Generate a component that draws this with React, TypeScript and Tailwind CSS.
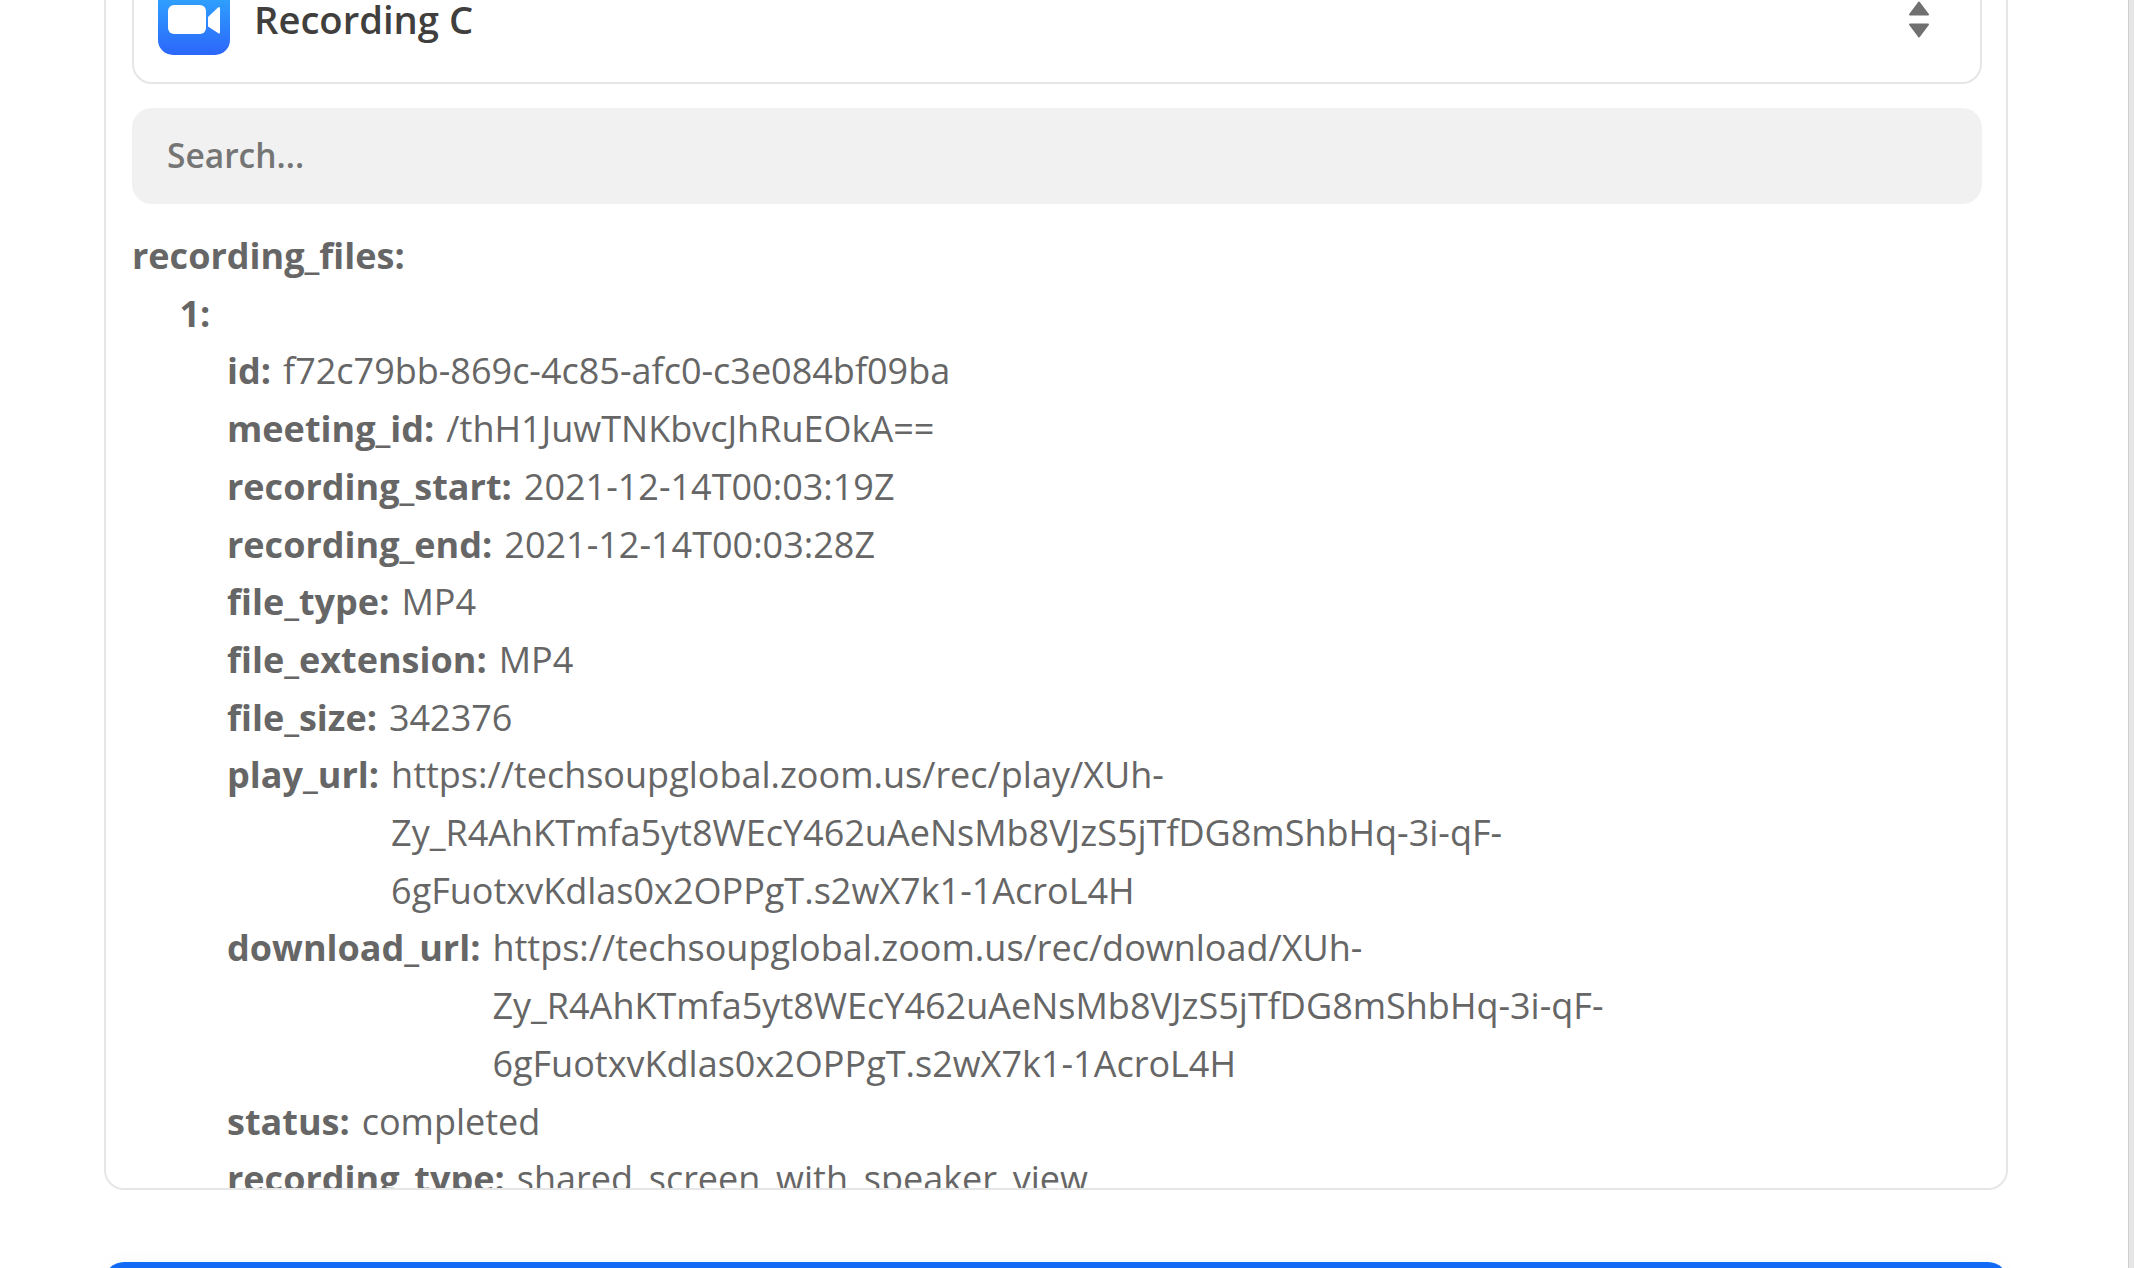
import type { ReactNode } from "react";

const fields: [string, ReactNode][] = [
  ["id", "f72c79bb-869c-4c85-afc0-c3e084bf09ba"],
  ["meeting_id", "/thH1JuwTNKbvcJhRuEOkA=="],
  ["recording_start", "2021-12-14T00:03:19Z"],
  ["recording_end", "2021-12-14T00:03:28Z"],
  ["file_type", "MP4"],
  ["file_extension", "MP4"],
  ["file_size", "342376"],
  ["play_url", "https://techsoupglobal.zoom.us/rec/play/XUh-Zy_R4AhKTmfa5yt8WEcY462uAeNsMb8VJzS5jTfDG8mShbHq-3i-qF-6gFuotxvKdlas0x2OPPgT.s2wX7k1-1AcroL4H"],
  ["download_url", "https://techsoupglobal.zoom.us/rec/download/XUh-Zy_R4AhKTmfa5yt8WEcY462uAeNsMb8VJzS5jTfDG8mShbHq-3i-qF-6gFuotxvKdlas0x2OPPgT.s2wX7k1-1AcroL4H"],
  ["status", "completed"],
  ["recording_type", "shared_screen_with_speaker_view"],
];

function ZoomIcon() {
  return (
    <svg viewBox="0 0 72 72" className="mt-[1px] h-[72px] w-[72px] shrink-0">
      <defs>
        <linearGradient id="zoomBg" x1="0" y1="0" x2="0" y2="1">
          <stop offset="0" stopColor="#2fb0ff" />
          <stop offset="1" stopColor="#2c66fb" />
        </linearGradient>
      </defs>
      <rect width="72" height="72" rx="15" fill="url(#zoomBg)" />
      <rect x="10" y="22" width="38" height="29" rx="6" fill="#fff" />
      <path d="M50 34 L60 24.5 Q62 23 62 25.5 V49 Q62 51.5 60 50 L50 43.5 Z" fill="#fff" />
    </svg>
  );
}

function Stepper() {
  return (
    <svg viewBox="0 0 22 38" className="mt-[2px] h-[39px] w-[22px] shrink-0 text-[#707070]">
      <path d="M11 2 L20 14 H2 Z" fill="currentColor" stroke="currentColor" strokeWidth="2" strokeLinejoin="round" />
      <path d="M2 24 H20 L11 36 Z" fill="currentColor" stroke="currentColor" strokeWidth="2" strokeLinejoin="round" />
    </svg>
  );
}

export default function App() {
  return (
    <div className="flex h-screen overflow-hidden bg-white font-['Open_Sans',sans-serif] text-[#666666]">
      <main className="min-w-0 flex-1 overflow-hidden pl-[104px]">
        <div className="-mt-[75px] flex h-[1265px] w-[1904px] flex-col rounded-[20px] border-2 border-[#e6e6e6] pl-[26px] pr-[24px] pt-[26px]">
          <div className="flex h-[131px] shrink-0 items-center gap-[24px] rounded-[20px] border-2 border-[#e6e6e6] pl-[24px] pr-[50px]">
            <ZoomIcon />
            <span className="mt-[2px] flex-1 text-[38.2px] font-semibold text-[#403f3e]">Recording C</span>
            <Stepper />
          </div>
          <input
            placeholder="Search..."
            className="mt-[24px] h-[96px] w-full shrink-0 rounded-[20px] bg-[#f1f1f1] px-[35px] pb-[2px] text-[33.5px] font-semibold outline-none placeholder:text-[#757575]"
          />
          <div className="mt-[23px] min-h-0 flex-1 overflow-hidden text-[36px] leading-[57.7px]">
            <div className="font-bold">recording_files:</div>
            <div className="pl-[47.5px]">
              <div className="font-bold">1:</div>
              <div className="pl-[47.5px]">
                {fields.map(([k, v]) => (
                  <div key={k} className="flex gap-[12px]">
                    <span className="shrink-0 font-bold">{k}:</span>
                    <span className="min-w-0">{v}</span>
                  </div>
                ))}
              </div>
            </div>
          </div>
        </div>
        <button className="mt-[72px] h-[90px] w-[1904px] rounded-[20px] bg-[#136bf5] shadow-[0_-4px_20px_rgba(0,0,0,0.02)]" />
      </main>
      <div className="w-[6px] shrink-0 border-l border-l-[#cfcfcf] bg-[#e6e6e6]" />
    </div>
  );
}
